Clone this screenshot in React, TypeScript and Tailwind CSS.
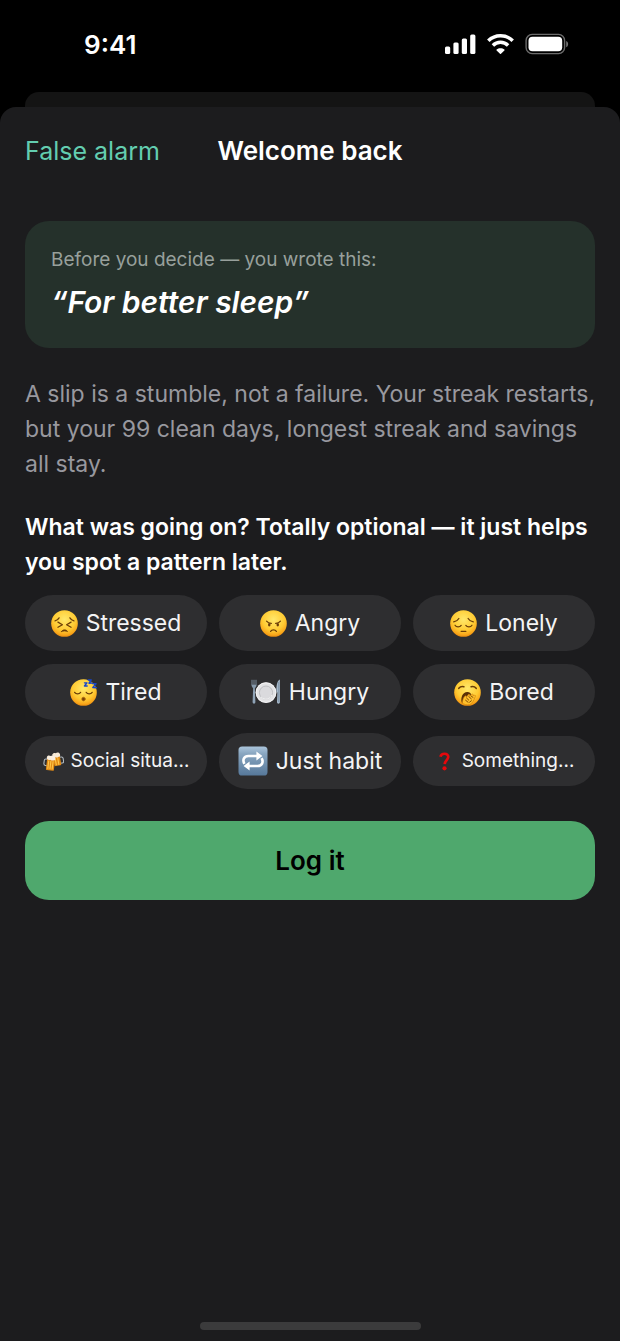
import React, { useState } from 'react';

const Face: React.FC<{ children: React.ReactNode }> = ({ children }) => (
  <svg viewBox="0 0 28 28" className="h-[27px] w-[27px] shrink-0" aria-hidden="true">
    <defs>
      <radialGradient id="skin" cx="0.5" cy="0.35" r="0.68">
        <stop offset="0" stopColor="#ffe86b" />
        <stop offset="0.6" stopColor="#ffcb33" />
        <stop offset="0.85" stopColor="#f9a61a" />
        <stop offset="1" stopColor="#e07f0a" />
      </radialGradient>
    </defs>
    <circle cx="14" cy="14" r="13.8" fill="url(#skin)" />
    <g fill="none" stroke="#6b3d07" strokeWidth="1.3" strokeLinecap="round" strokeLinejoin="round">
      {children}
    </g>
  </svg>
);

const Stressed = () => (
  <Face>
    <path d="M4.2 11.2C5.6 11 7.5 9.8 8.4 8.2M23.8 11.2C22.4 11 20.5 9.8 19.6 8.2" />
    <path d="M7.2 12.6l4.6 2.7-4.6 2.6M20.8 12.6l-4.6 2.7 4.6 2.6" />
    <path d="M10.8 22.4c1.2-2.4 5.2-2.4 6.4 0-1.8-.9-4.6-.9-6.4 0z" fill="#6b3d07" strokeWidth="0.7" />
  </Face>
);

const Angry = () => (
  <Face>
    <path d="M6.8 11.6c1.4 1.7 3 2.4 5 2.3M21.2 11.6c-1.4 1.7-3 2.4-5 2.3" />
    <ellipse cx="9.6" cy="15.3" rx="1.3" ry="1.7" fill="#6b3d07" stroke="none" />
    <ellipse cx="18.4" cy="15.3" rx="1.3" ry="1.7" fill="#6b3d07" stroke="none" />
    <path d="M11 22.2c1.3-2 4.7-2 6 0" />
  </Face>
);

const Lonely = () => (
  <Face>
    <path d="M3.8 12.2c2-.3 4.4-1.6 5.4-3.4M24.2 12.2c-2-.3-4.4-1.6-5.4-3.4" />
    <path d="M5.2 15.8c1.4 2.2 4.9 2.2 6.4.2M22.8 15.8c-1.4 2.2-4.9 2.2-6.4.2" />
    <path d="M11.6 22.2h4.8" />
  </Face>
);

const Tired = () => (
  <Face>
    <path d="M4.8 13.8c1.4 2.1 4.8 2.1 6.2 0M16.8 13.8c1.4 2.1 4.8 2.1 6.2 0" />
    <ellipse cx="14" cy="20.8" rx="1.8" ry="1.9" fill="#7a4409" stroke="#a8640f" strokeWidth="0.7" />
    <g stroke="#1746c9" strokeWidth="1.5">
      <path d="M15 4h2.6L15 7.2h2.8" />
      <path d="M19 1.1l3-.2-2.3 3.5 2.9-.2" />
      <path d="M23.4 4.8l3.6.2-3.3 3.8 3.6.2" />
    </g>
  </Face>
);

const Bored = () => (
  <Face>
    <path d="M5 9.6C6.3 8.1 8.4 7.5 10.2 8M17.8 8c1.8-.5 3.9.1 5.2 1.6" strokeWidth="1.7" />
    <path d="M8 24.4C6.6 18.6 9.2 13.8 13.6 13.4c2.2-.2 3.8.8 4.2 2.6L14 20l-3 5.6z" fill="#5b3106" stroke="none" />
    <path d="M8.6 24.8c.4-3.8 1.6-6.7 3.2-7.3.8-.3 1.4.4 1.1 1.2l1.9-2.5c.7-.9 1.9-.1 1.5.9l2.5-1.3c1-.4 1.6.7.8 1.4l1.9-.3c1-.1 1.3 1 .5 1.5-1.4 3.9-3.1 6.8-5.6 8.2-3 .5-6 .1-7.8-1.8z" fill="#ffc02b" stroke="#c97809" strokeWidth="0.6" />
    <path d="M13 19.7l2.2 2.1M15.3 18.2l2.6 2.3M17.5 17.5l2.2 1.6M12 22l2.6 2.1M16.2 24l1.8-1.4" strokeWidth="0.9" />
  </Face>
);

const Hungry = () => (
  <svg viewBox="0 0 30 28" className="h-7 w-[30px] shrink-0" aria-hidden="true">
    <circle cx="15" cy="14.6" r="10.4" fill="#e3e3e5" />
    <circle cx="15" cy="14.6" r="9.8" fill="none" stroke="#f6f6f7" strokeWidth="0.8" />
    <circle cx="15" cy="14.6" r="6.6" fill="#dadadd" stroke="#b9babd" strokeWidth="0.9" />
    <path d="M10 18.8a6.6 6.6 0 0 0 11.1-1.9" fill="none" stroke="#fff" strokeWidth="0.8" />
    <path d="M2.2 9.4L1.6 24c0 2.2 2.8 2.2 2.8 0L3.8 9.4z" fill="#8fa3b6" />
    <path d="M.6 6.8h4.8c0 2.2-1 3.4-2.4 3.4S.6 9 .6 6.8z" fill="#8598aa" />
    <path d="M1 1.8v5.6M3 1.8v5.6M5 1.8v5.6" stroke="#8fa3b6" strokeWidth="0.8" fill="none" />
    <path d="M28.9 1.4c-2.3.8-3.7 5-3.5 12.3l1 .8-.4 9.6c0 2.2 2.9 2.2 2.9 0z" fill="#a3b6c8" />
    <path d="M27.7 4v20" stroke="#71879b" strokeWidth="0.7" />
  </svg>
);

const Habit = () => (
  <svg viewBox="0 0 30 30" className="h-[30px] w-[30px] shrink-0" aria-hidden="true">
    <defs>
      <linearGradient id="tile" x1="0" y1="0" x2="0" y2="1">
        <stop offset="0" stopColor="#abc5dc" />
        <stop offset="0.25" stopColor="#89a6c0" />
        <stop offset="1" stopColor="#56789a" />
      </linearGradient>
    </defs>
    <rect x="0.5" y="0.5" width="29" height="29" rx="3.6" fill="url(#tile)" />
    <g fill="none" stroke="#fff" strokeWidth="2.6">
      <path d="M6.4 17.8c-2.2-4-.4-7.8 4-7.8h9.2" />
      <path d="M23.6 12.2c2.2 4 .4 7.8-4 7.8h-9.2" />
    </g>
    <path d="M18.4 5.4l6 4.6-6 4.6zM11.6 15.4l-6 4.6 6 4.6z" fill="#fff" />
  </svg>
);

const Beers = () => (
  <svg viewBox="0 0 22 22" className="h-[21px] w-[21px] shrink-0" aria-hidden="true">
    <g transform="rotate(-10 15 9)">
      <path d="M17.5 7h2c1.2 0 1.7.6 1.7 1.6v3c0 1.2-.6 1.8-1.7 1.8h-2" fill="none" stroke="#b6bec3" strokeWidth="1.1" />
      <rect x="11" y="4.4" width="7.2" height="11" rx="1" fill="#e28a13" />
      <path d="M13 7.5v7.2M15.7 7.5v7.2" stroke="#ffc94c" strokeWidth="1.1" />
      <path d="M10.6 3.2c1-1.8 2.8-1.7 3.8-1 1.6-1 4.2-.3 4.3 1.7.3 2.5-1 2.7-1.8 2.3-1 1-2.4.7-3.2.2-1.8.7-3.7-.6-3.1-3.2z" fill="#f8ead6" />
    </g>
    <g transform="rotate(7 8 13)">
      <path d="M4.6 9H2.7C1.5 9 1 9.7 1 10.8v3c0 1.2.7 2 1.7 2h1.9" fill="none" stroke="#b6bec3" strokeWidth="1.1" />
      <rect x="3.8" y="8" width="8.4" height="12.4" rx="1" fill="#e18a15" />
      <path d="M5.7 10.4v8.7M8 10.4v8.7M10.3 10.4v8.7" stroke="#ffc74a" strokeWidth="1.1" />
      <path d="M3.3 6.6c.6-1.8 2.6-2 3.7-1.2 1.9-1.4 5-.6 5.3 1.5.4 2-1 2.9-2 2.4-1.1.9-2.5.6-3.3 0-1.8 1-4.3-.2-3.7-2.7z" fill="#fbefdf" />
    </g>
  </svg>
);

const Question = () => (
  <svg viewBox="0 0 22 22" className="h-[21px] w-[21px] shrink-0" aria-hidden="true">
    <path d="M6.8 6C7.3 3.7 9 2.9 11 2.9c2.6 0 4.1 1.3 3.9 3.6-.3 2.8-3.4 3.6-3.7 7.3" fill="none" stroke="#e5080c" strokeWidth="2.8" />
    <circle cx="11" cy="18.2" r="2.2" fill="#e5080c" />
  </svg>
);

const reasons = [
  { label: 'Stressed', icon: <Stressed /> },
  { label: 'Angry', icon: <Angry /> },
  { label: 'Lonely', icon: <Lonely /> },
  { label: 'Tired', icon: <Tired /> },
  { label: 'Hungry', icon: <Hungry /> },
  { label: 'Bored', icon: <Bored /> },
  { label: 'Social situa…', icon: <Beers />, small: true },
  { label: 'Just habit', icon: <Habit /> },
  { label: 'Something…', icon: <Question />, small: true },
];

const StatusBar: React.FC = () => (
  <div className="flex h-[92px] items-center justify-between pr-[51px] pb-1 pl-[84px]">
    <span className="text-[26px] font-semibold">9:41</span>
    <svg width="125" height="22" viewBox="0 0 125 22" aria-hidden="true">
      <g fill="#fff">
        <rect x="1" y="13.5" width="5.2" height="7.5" rx="1.5" />
        <rect x="9.4" y="9.5" width="5.2" height="11.5" rx="1.5" />
        <rect x="17.8" y="5.5" width="5.2" height="15.5" rx="1.5" />
        <rect x="26.2" y="1.5" width="5.2" height="19.5" rx="1.5" />
        <path d="M56.5 15.2c1.5 0 2.8.5 3.9 1.4.3.3.3.6 0 .9l-3.4 3.3c-.3.3-.7.3-1 0l-3.4-3.3c-.3-.3-.3-.6 0-.9 1.1-.9 2.4-1.4 3.9-1.4z" />
      </g>
      <g fill="none" stroke="#fff" strokeWidth="3.5">
        <path d="M44.3 7.7a17.3 17.3 0 0 1 24.4 0" />
        <path d="M48.9 12.4a10.8 10.8 0 0 1 15.2 0" />
      </g>
      <rect x="82.1" y="1.4" width="38.5" height="19.2" rx="6" fill="none" stroke="#fff" strokeOpacity="0.42" strokeWidth="1.4" />
      <rect x="84.5" y="3.8" width="33.7" height="14.4" rx="4" fill="#fff" />
      <path d="M122.2 8v6.2c2.6-1.2 2.6-5 0-6.2z" fill="#fff" fillOpacity="0.45" />
    </svg>
  </div>
);

const App: React.FC = () => {
  const [selected, setSelected] = useState<string | null>(null);

  return (
    <div className="flex min-h-screen flex-col bg-black font-['Inter','Liberation_Sans',sans-serif] text-white">
      <StatusBar />

      {/* Edge of the sheet underneath */}
      <div className="mx-[25px] h-[15px] rounded-t-[14px] bg-[#141414]" />

      <main className="flex flex-1 flex-col rounded-t-2xl bg-[#1c1c1e] px-[25px]">
        <header className="grid h-[88px] grid-cols-[1fr_auto_1fr] content-center items-baseline">
          <button type="button" className="justify-self-start text-[25px] text-[#63cdb0]">
            False alarm
          </button>
          <h1 className="text-[26px] font-semibold">Welcome back</h1>
        </header>

        <section className="mt-[26px] rounded-3xl bg-[#25312b] px-[26px] py-[25px]">
          <p className="text-[19px] leading-7 text-[#98a09c]">Before you decide — you wrote this:</p>
          <p className="mt-[7px] text-[30px] leading-[42px] font-semibold italic">“For better sleep”</p>
        </section>

        <p className="-mr-1 mt-[29px] text-[23px] leading-[35px] text-[#98989f]">
          A slip is a stumble, not a failure. Your streak restarts, but your 99 clean days, longest streak and savings
          all stay.
        </p>

        <h2 className="mt-7 text-[23px] leading-[35px] font-semibold">
          What was going on? Totally optional — it just helps you spot a pattern later.
        </h2>

        <div className="mt-[15px] grid grid-cols-3 items-center gap-x-3 gap-y-[13px]">
          {reasons.map((reason) => (
            <button
              key={reason.label}
              type="button"
              aria-pressed={selected === reason.label}
              onClick={() => setSelected(selected === reason.label ? null : reason.label)}
              className={`flex items-center justify-center rounded-full bg-[#2e2e30] whitespace-nowrap text-[#f4f4f5] ${
                reason.small ? 'h-[50px] gap-[7px] text-[19px]' : 'h-14 gap-2 text-[23px]'
              }`}
            >
              {reason.icon}
              {reason.label}
            </button>
          ))}
        </div>

        <button type="button" className="mt-8 h-[79px] rounded-3xl bg-[#4fa86d] text-[26px] font-semibold text-black">
          Log it
        </button>

        {/* Home indicator */}
        <div className="mt-auto mb-[11px] h-2 w-[221px] self-center rounded-full bg-[#3b3b3c]" />
      </main>
    </div>
  );
};

export default App;
